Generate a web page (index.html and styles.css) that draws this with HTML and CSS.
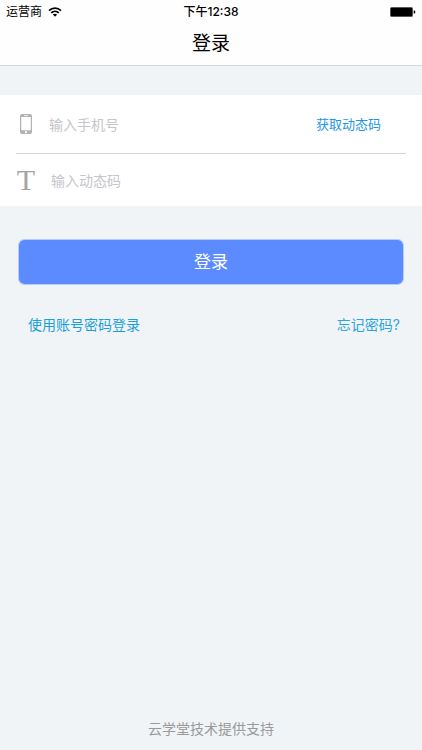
FILE: index.html
```
<!DOCTYPE html>
<html lang="zh-CN">
<head>
<meta charset="utf-8">
<meta name="viewport" content="width=device-width, initial-scale=1">
<title>登录</title>
<link rel="stylesheet" href="styles.css">
</head>
<body>
<header class="header">
  <div class="status">
    <div class="carrier">
      <span>运营商</span>
      <svg class="wifi" width="14" height="10" viewBox="0 0 14 10" aria-hidden="true">
        <path d="M1 3.6C4.4.2 9.6.2 13 3.6M3.2 5.9c2.2-2.1 5.4-2.1 7.6 0" fill="none" stroke="#000" stroke-width="1.7"/>
        <path d="M4.9 7.6c1.2-1.1 3-1.1 4.2 0L7 9.7z"/>
      </svg>
    </div>
    <time class="time">下午12:38</time>
    <svg class="battery" width="26" height="10" viewBox="0 0 26 10" aria-hidden="true">
      <rect width="23" height="10" rx="1.5" fill="#777"/>
      <rect x=".7" y=".7" width="21.6" height="8.6" rx="1"/>
      <path d="M23.7 3.5h.8q.8 0 .8 1.5t-.8 1.5h-.8z"/>
    </svg>
  </div>
  <h1 class="title">登录</h1>
</header>
<main class="main">
  <form class="form">
    <div class="fields">
      <div class="row">
        <label class="icon" for="phone" aria-label="手机号">
          <svg width="12" height="20" viewBox="0 0 12 20" aria-hidden="true">
            <path fill="#b2b2b2" fill-rule="evenodd" d="M2 0h8q2 0 2 2v16q0 2-2 2H2q-2 0-2-2V2q0-2 2-2zM1.2 3v13.2h9.6V3zM4 1.2v.7h4v-.7zM6 17.1a1.1 1.1 0 1 0 0 2.2 1.1 1.1 0 0 0 0-2.2z"/>
          </svg>
        </label>
        <input class="input" id="phone" type="tel" placeholder="输入手机号">
        <button class="get-code" type="button">获取动态码</button>
      </div>
      <div class="row row-code">
        <label class="icon letter" for="code" aria-label="动态码">T</label>
        <input class="input" id="code" type="text" placeholder="输入动态码">
      </div>
    </div>
    <button class="submit" type="submit">登录</button>
  </form>
  <nav class="links">
    <a class="account" href="#">使用账号密码登录</a>
    <a href="#">忘记密码?</a>
  </nav>
</main>
<footer class="footer">云学堂技术提供支持</footer>
</body>
</html>
```
FILE: styles.css
```
* {
  box-sizing: border-box;
}

body {
  margin: 0;
  min-height: 100vh;
  display: flex;
  flex-direction: column;
  background: #f0f4f7;
  color: #000;
  font-family: Inter, "Noto Sans CJK SC", sans-serif;
  font-size: 14px;
  line-height: 20px;
}

button,
input {
  border: 0;
  padding: 0;
  background: none;
  font: inherit;
}

.header {
  background: #fefefe;
  border-bottom: 1px solid #d3d6da;
}

.status {
  display: grid;
  grid-template-columns: 1fr auto 1fr;
  align-items: center;
  padding: 1px 6px 0;
  font-size: 12px;
  line-height: 21px;
}

.carrier {
  display: flex;
  align-items: center;
  gap: 6px;
}

.time {
  font-weight: 500;
}

.battery {
  justify-self: end;
}

.title {
  margin: 0;
  padding: 8px 0 7px;
  font-size: 19px;
  font-weight: 400;
  line-height: 28px;
  text-align: center;
}

.main {
  flex: 1;
  padding-top: 29px;
}

.fields {
  padding: 0 16px;
  background: #fff;
}

.row {
  display: flex;
  align-items: center;
  height: 59px;
  padding-right: 25px;
  border-bottom: 1px solid #d4d4d4;
}

.row-code {
  height: 52px;
  border-bottom: 0;
}

.icon {
  display: flex;
  justify-content: center;
  width: 20px;
  margin-right: 13px;
}

.letter {
  margin-right: 15px;
  color: #a4a4a4;
  font-family: "Liberation Serif", serif;
  font-size: 30px;
}

.input {
  flex: 1;
  min-width: 0;
  height: 32px;
  outline: 0;
}

.input::placeholder {
  color: #c5c5ca;
  opacity: 1;
}

.get-code {
  color: #1e96e6;
  font-size: 13px;
}

.submit {
  display: block;
  width: calc(100% - 36px);
  height: 46px;
  margin: 33px auto 0;
  border: 1px solid #b9cbfb;
  border-radius: 6px;
  background: #5b8bff;
  background-clip: padding-box;
  color: #fff;
  font-size: 17px;
}

.links {
  display: flex;
  justify-content: space-between;
  padding: 30px 22px 0 28px;
}

.links a {
  color: #2ba5da;
  text-decoration: none;
}

.links .account {
  color: #1a9fd6;
}

.footer {
  padding-bottom: 11px;
  color: #999;
  text-align: center;
}
```
